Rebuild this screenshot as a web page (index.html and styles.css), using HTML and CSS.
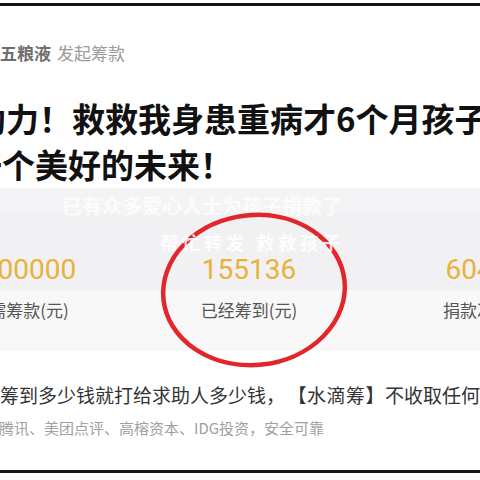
FILE: index.html
```html
<!DOCTYPE html>
<html lang="zh-CN">
<head>
    <meta charset="UTF-8">
    <meta name="viewport" content="width=device-width, initial-scale=1.0">
    <title>水滴筹</title>
    <link rel="stylesheet" href="styles.css">
</head>
<body>
    <div class="frame">
        <div class="author"><span class="name">五粮液</span>发起筹款</div>

        <h1 class="title">
            <span class="line">助力！救救我身患重病才6个月孩子</span>
            <span class="line second">一个美好的未来！</span>
        </h1>

        <div class="stats">
            <div class="ghost">已有众多爱心人士为孩子捐款了</div>
            <div class="nums">
                <span>300000</span>
                <span>155136</span>
                <span>6046</span>
            </div>
            <div class="labels">
                <span>需筹款(元)</span>
                <span>已经筹到(元)</span>
                <span>捐款次数</span>
            </div>
        </div>

        <p class="desc">筹到多少钱就打给求助人多少钱，<span class="brand">【水滴筹】</span>不收取任何费用</p>
        <p class="investors">腾讯、美团点评、高榕资本、IDG投资，安全可靠</p>
    </div>

    <!-- 手画的红圈 -->
    <svg class="mark" width="480" height="480" viewBox="0 0 480 480">
        <ellipse cx="254" cy="290" rx="91" ry="75" transform="rotate(-6 254 290)" fill="none" stroke="#e2262c" stroke-width="4.5"/>
        <text x="160" y="250" class="mark-text">帮忙转发 救救孩子</text>
    </svg>
</body>
</html>
```

FILE: styles.css
```css
body {
    margin: 0;
    background: #fff;
    font-family: "Noto Sans CJK SC", sans-serif;
    overflow: hidden;
}
.frame {
    margin-top: 3px;
    height: 464px;
    border-top: 3px solid #161616;
    border-bottom: 3px solid #161616;
    box-shadow: 0 1px 0 #aaa;
    overflow: hidden;
}
.author {
    padding-top: 34px;
    font-size: 17px;
    line-height: 26px;
    color: #9a9a9a;
    white-space: nowrap;
}
.author .name {
    color: #6e6e6e;
    font-weight: bold;
    margin-right: 6px;
}
.title {
    margin: 29px 0 1px -27px;
    font-size: 33px;
    line-height: 46px;
    font-weight: 700;
    color: #111;
    white-space: nowrap;
}
.title .line {
    display: block;
}
.title .second {
    margin-left: -4px;
}
.ghost {
    height: 16px;
    padding-top: 8px;
    padding-left: 62px;
    background: #f4f4f6;
    color: rgba(255, 255, 255, 0.75);
    font-size: 20px;
    font-weight: bold;
    line-height: 20px;
    white-space: nowrap;
}
.nums,
.labels {
    display: grid;
    grid-template-columns: 220px 220px 236px;
    margin-left: -81px;
    text-align: center;
    white-space: nowrap;
}
.nums {
    padding: 41px 0 3px;
    background: #f1f1f3;
    font-family: Roboto, "Liberation Sans", sans-serif;
    font-size: 28px;
    line-height: 34px;
    color: #e8b23b;
}
.labels {
    padding: 8px 0 29px;
    background: #f8f8f9;
    font-size: 17px;
    line-height: 24px;
    color: #555;
}
.desc {
    margin: 31px 0 0;
    font-size: 19px;
    line-height: 26px;
    color: #333;
    white-space: nowrap;
}
.desc .brand {
    margin-left: 12px;
    letter-spacing: 0.5px;
}
.investors {
    margin: 10px 0 0 -1px;
    font-size: 15px;
    line-height: 20px;
    color: #a0a0a0;
    white-space: nowrap;
}
.mark {
    position: absolute;
    left: 0;
    top: 0;
    pointer-events: none;
}
.mark-text {
    fill: rgba(255, 255, 255, 0.9);
    font-family: "Noto Sans CJK SC", sans-serif;
    font-size: 18px;
    font-weight: bold;
    letter-spacing: 4px;
}
```
